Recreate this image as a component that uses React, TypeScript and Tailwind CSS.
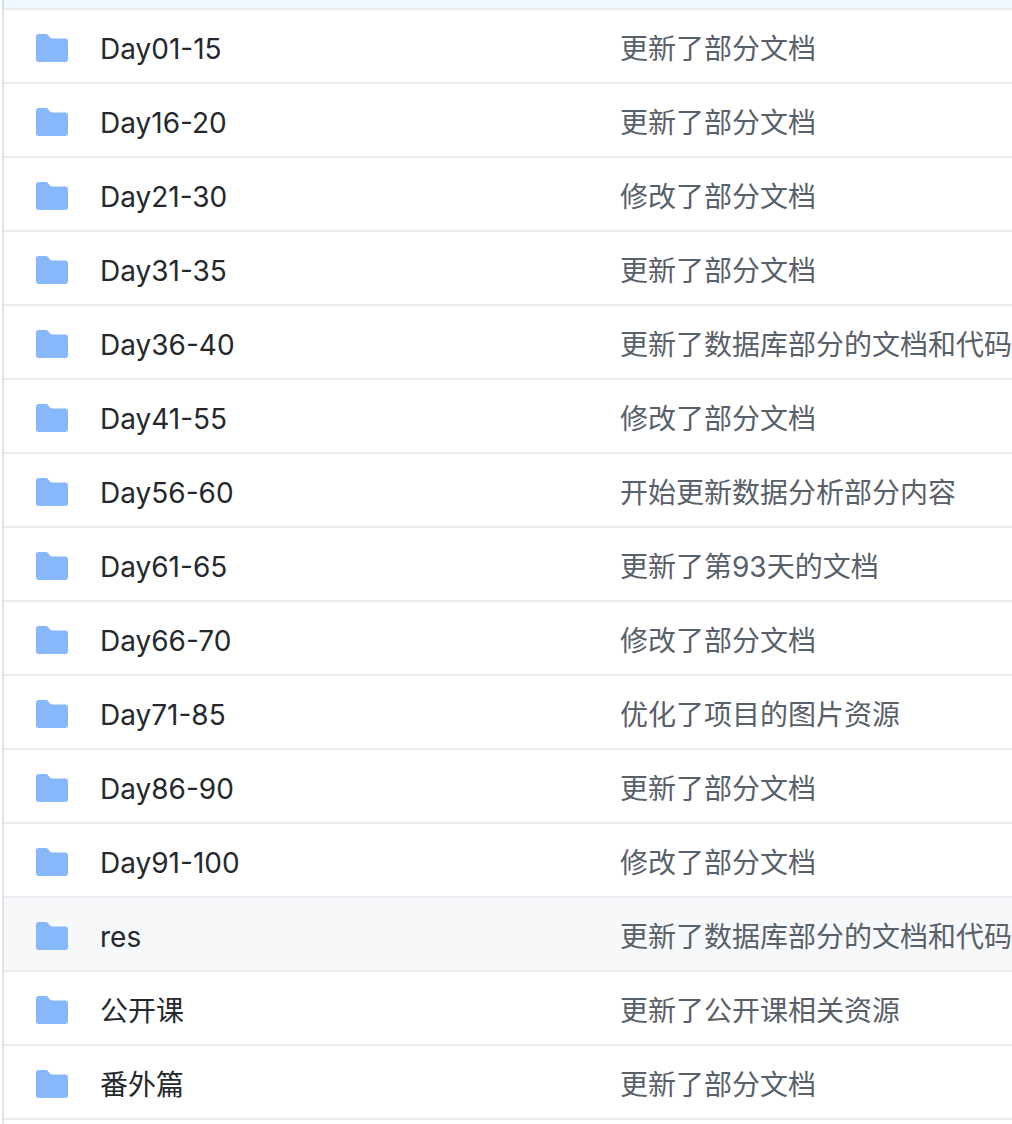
const rows = [
  { name: "Day01-15", message: "更新了部分文档" },
  { name: "Day16-20", message: "更新了部分文档" },
  { name: "Day21-30", message: "修改了部分文档" },
  { name: "Day31-35", message: "更新了部分文档" },
  { name: "Day36-40", message: "更新了数据库部分的文档和代码" },
  { name: "Day41-55", message: "修改了部分文档" },
  { name: "Day56-60", message: "开始更新数据分析部分内容" },
  { name: "Day61-65", message: "更新了第93天的文档" },
  { name: "Day66-70", message: "修改了部分文档" },
  { name: "Day71-85", message: "优化了项目的图片资源" },
  { name: "Day86-90", message: "更新了部分文档" },
  { name: "Day91-100", message: "修改了部分文档" },
  { name: "res", message: "更新了数据库部分的文档和代码", hover: true },
  { name: "公开课", message: "更新了公开课相关资源" },
  { name: "番外篇", message: "更新了部分文档" },
];

const FolderIcon = () => (
  <svg viewBox="0 0 32 28" className="w-8 h-7 shrink-0" fill="#87b8fb">
    <path d="M0 2.500C0 1.100 1.100 0 2.500 0h7.200c.9 0 1.700.4 2.200 1.100L14 3.600c.4.5 1 .8 1.700.8h13.800c1.400 0 2.500 1.100 2.500 2.500v18.600c0 1.400-1.100 2.500-2.500 2.500h-27C1.100 28 0 26.900 0 25.500z" />
  </svg>
);

const App = () => {
  return (
    <div className="w-[1012px] h-[1124px] overflow-hidden bg-white pl-0.5 font-['Inter','Noto_Sans_CJK_SC',sans-serif]">
      {/* Header strip */}
      <div className="h-2 bg-[#f1f8ff] border-l-2 border-[#c8e1ff]" />

      <div className="h-full border-l-2 border-[#e1e4e8]">
        <div className="h-0.5 bg-[#eaecef]" />

        {/* File rows */}
        {rows.map((row) => (
          <div
            key={row.name}
            className={`flex items-center h-[74px] border-b-2 border-[#eaecef] ${row.hover ? "bg-[#f6f8fa]" : ""}`}
          >
            <div className="w-[96px] pl-8 pt-1 shrink-0">
              <FolderIcon />
            </div>
            <div className="w-[520px] pt-1.5 shrink-0 text-[28px] text-[#24292e]">{row.name}</div>
            <div className="pt-1.5 text-[28px] text-[#586069] whitespace-nowrap">{row.message}</div>
          </div>
        ))}
      </div>
    </div>
  );
};

export default App;
